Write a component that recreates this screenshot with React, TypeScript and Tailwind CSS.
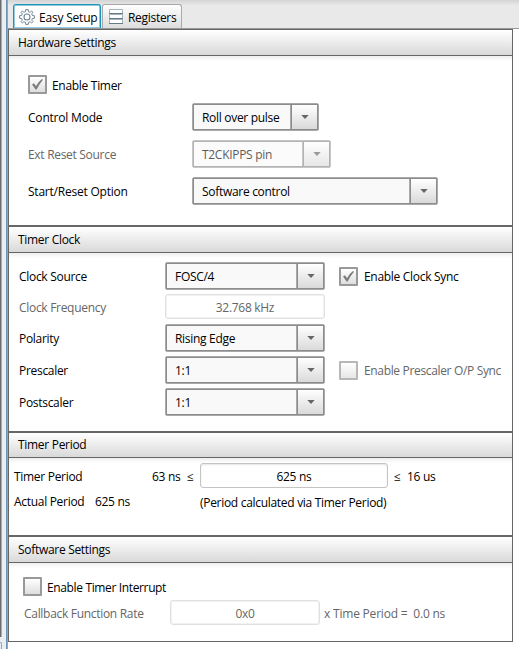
import React from "react";

const FONT = "font-['Open_Sans','Segoe_UI',sans-serif]";

function Label({ children, className = "pt-[2px]" }: { children: React.ReactNode; className?: string }) {
  return <span className={`block shrink-0 whitespace-pre ${className}`}>{children}</span>;
}

function Select({ value, className, disabled = false }: { value: string; className: string; disabled?: boolean }) {
  return (
    <div
      className={`flex h-7 shrink-0 rounded-[2px] border border-[#a9a9a9] ${disabled ? "opacity-65" : ""} ${className}`}
    >
      <div className="flex flex-1 border border-[#8c8c8c] bg-[#f9f9f9]">
        <span className="flex-1 whitespace-nowrap pl-2 leading-[25px]">{value}</span>
        <span className="flex w-[27px] border-l border-[#a9a9a9]">
          <span className="flex flex-1 items-center justify-center border-l border-[#8c8c8c] bg-linear-to-b from-white to-[#dadada]">
            <svg width="8" height="4" viewBox="0 0 8 4"><path d="M0.3 0H7.7L4 4Z" fill="#666" /></svg>
          </span>
        </span>
      </div>
    </div>
  );
}

function Check({ checked = false, disabled = false }: { checked?: boolean; disabled?: boolean }) {
  return (
    <span
      className={`flex size-[19px] shrink-0 items-center justify-center rounded-[1px] border-2 border-[#999] bg-linear-to-b from-white to-[#dedede] ${disabled ? "opacity-70" : ""}`}
    >
      {checked && (
        <svg width="13" height="13" viewBox="0 0 13 13">
          <path d="M1 6.5L3 5.3L5 8.2Q7.5 3.5 11 1L12 1.8Q8.3 6 5.6 11.5H4.6Z" fill="#7b7b7b" />
        </svg>
      )}
    </span>
  );
}

function Field({ value, className }: { value: string; className: string }) {
  return (
    <div
      className={`h-[25px] shrink-0 rounded-[3px] border bg-white text-center leading-[25px] ${className}`}
    >
      {value}
    </div>
  );
}

function Section({ title, className, titleClass = "h-[26px] leading-[25px]", children }: { title: string; className: string; titleClass?: string; children: React.ReactNode }) {
  return (
    <section className={`shrink-0 border-y border-[#666] ${className}`}>
      <h2 className={`border-b border-[#666] bg-linear-to-b from-white to-[#d9d9d9] pl-[9px] ${titleClass}`}>{title}</h2>
      <div className="h-[5px] bg-linear-to-b from-[#eeeeee] to-white" />
      {children}
    </section>
  );
}

function GearIcon() {
  return (
    <svg width="16" height="16" viewBox="0 0 16 16" fill="none" stroke="#6f8494">
      <path
        d="M6.7 .6H9.3L9.5 2.6L11.1 3.3L12.6 2L14 3.4L12.7 4.9L13.4 6.5L15.4 6.7V9.3L13.4 9.5L12.7 11.1L14 12.6L12.6 14L11.1 12.7L9.5 13.4L9.3 15.4H6.7L6.5 13.4L4.9 12.7L3.4 14L2 12.6L3.3 11.1L2.6 9.5L.6 9.3V6.7L2.6 6.5L3.3 4.9L2 3.4L3.4 2L4.9 3.3L6.5 2.6Z"
        strokeWidth="1"
      />
      <circle cx="8" cy="8" r="3" strokeWidth="1.1" />
    </svg>
  );
}

function RegistersIcon() {
  return (
    <svg width="14" height="15" viewBox="0 0 14 15">
      <path d="M.5 .5H13.5V4.5H.5ZM.5 5.5H13.5V9.5H.5ZM.5 10.5H13.5V14.5H.5Z" fill="#fff" stroke="#a5b3bc" />
      <path d="M0 4.5H14M0 9.5H14M0 14.5H14" stroke="#647a89" />
    </svg>
  );
}

export default function App() {
  return (
    <div className={`flex h-[649px] w-[519px] overflow-hidden bg-white text-[12px] tracking-[-0.3px] text-black ${FONT}`}>
      <div className="flex w-2 shrink-0 bg-[#e9eef2]">
        <div className="flex w-[2px] flex-col">
          <div className="h-[637px] border-r border-[#9aafc3] bg-[#6b6b6b]" />
          <div className="mt-[5px] h-[7px] rounded-tr border-t border-r border-[#8fa3b3]" />
        </div>
        <div className="ml-auto w-[2px] border-l border-[#6f93b5] bg-[#93a5b2]" />
      </div>
      <div className="flex min-w-0 flex-1 flex-col">
        <div className="flex h-[29px] shrink-0 items-end border-b border-[#999] bg-linear-to-b from-[#d4d4d4] via-[#e9e9e9] via-20% to-[#e9e9e9] pl-[5px]">
          <div className="flex h-6 w-[88px] items-center rounded-t-[3px] border border-b-0 border-[#1d93bd] bg-white pl-[5px] inset-ring inset-ring-[#8fcbe0]">
            <GearIcon />
            <Label className="ml-[4px] pt-[2px] tracking-[-0.2px]">Easy Setup</Label>
          </div>
          <div className="ml-[1px] flex h-6 w-20 items-center rounded-t-[3px] border border-b-0 border-[#a9a9a9] bg-linear-to-b from-white to-[#dddddd] pl-[6px]">
            <RegistersIcon />
            <Label className="ml-[5px] pt-[2px]">Registers</Label>
          </div>
        </div>
        <main className="flex h-[613px] w-[505px] shrink-0 flex-col border-x border-[#666]">
          <Section title="Hardware Settings" className="h-[197px]">
            <div className="flex flex-col pl-[19px] pt-[14px]">
              <div className="flex h-[19px] items-center gap-[5px]">
                <Check checked />
                <Label>Enable Timer</Label>
              </div>
              <div className="mt-[9px] flex h-7 items-center">
                <Label className="w-[164px] pt-[2px] tracking-[-0.2px]">Control Mode</Label>
                <Select value="Roll over pulse" className="w-[127px]" />
              </div>
              <div className="mt-[9px] flex h-7 items-center">
                <Label className="w-[164px] pt-[2px] text-[#666]">Ext Reset Source</Label>
                <Select value="T2CKIPPS pin" className="w-[139px]" disabled />
              </div>
              <div className="mt-[9px] flex h-7 items-center">
                <Label className="w-[164px] pt-[2px] tracking-[-0.22px]">Start/Reset Option</Label>
                <Select value="Software control" className="w-[246px]" />
              </div>
            </div>
          </Section>
          <Section title="Timer Clock" className="h-[206px]">
            <div className="flex flex-col pl-[10px] pt-[4px]">
              <div className="flex h-7 items-center">
                <Label className="w-[146px] pt-[2px]">Clock Source</Label>
                <Select value="FOSC/4" className="w-[160px]" />
                <div className="ml-[14px] flex items-center gap-[6px]">
                  <Check checked />
                  <Label>Enable Clock Sync</Label>
                </div>
              </div>
              <div className="mt-[4px] flex h-[25px] items-center text-[#666]">
                <Label className="w-[146px] pt-[2px]">Clock Frequency</Label>
                <Field value="32.768 kHz" className="w-[160px] border-[#e0e0e0] shadow-[inset_0_0_0_1px_#f2f2f2]" />
              </div>
              <div className="mt-[5px] flex h-7 items-center">
                <Label className="w-[146px] pt-[2px]">Polarity</Label>
                <Select value="Rising Edge" className="w-[160px]" />
              </div>
              <div className="mt-[4px] flex h-7 items-center">
                <Label className="w-[146px] pt-[2px]">Prescaler</Label>
                <Select value="1:1" className="w-[160px]" />
                <div className="ml-[14px] flex items-center gap-[6px] text-[#666]">
                  <Check disabled />
                  <Label className="pt-[2px] tracking-[-0.34px]">Enable Prescaler O/P Sync</Label>
                </div>
              </div>
              <div className="mt-[4px] flex h-7 items-center">
                <Label className="w-[146px] pt-[2px]">Postscaler</Label>
                <Select value="1:1" className="w-[160px]" />
              </div>
            </div>
          </Section>
          <Section title="Timer Period" className="h-[104px]" titleClass="h-[25px] leading-[23px]">
            <div className="pl-[5px]">
              <div className="flex h-[25px] items-center">
                <Label className="w-[138px] pt-[2px]">Timer Period</Label>
                <Label className="w-[35px] pt-[2px]">63 ns</Label>
                <Label className="w-[13px] pt-[2px]">≤</Label>
                <Field value="625 ns" className="w-[188px] border-[#c4c4c4] shadow-[inset_0_1px_2px_#e4e4e4]" />
                <Label className="ml-[6px] w-[13px] pt-[2px]">≤</Label>
                <Label>16 us</Label>
              </div>
              <div className="mt-[4px] flex h-[20px] items-center">
                <Label className="w-[81px]">Actual Period</Label>
                <Label className="w-[105px]">625 ns</Label>
                <Label>(Period calculated via Timer Period)</Label>
              </div>
            </div>
          </Section>
          <Section title="Software Settings" className="h-[106px]">
            <div className="flex flex-col pl-[14px] pt-[9px]">
              <div className="flex h-[19px] items-center gap-[5px]">
                <Check />
                <Label className="pt-[2px] tracking-[-0.36px]">Enable Timer Interrupt</Label>
              </div>
              <div className="mt-[4px] flex h-[25px] items-center text-[#666]">
                <Label className="w-[147px] pl-px pt-[2px]">Callback Function Rate</Label>
                <Field value="0x0" className="w-[150px] border-[#e0e0e0] shadow-[inset_0_0_0_1px_#f2f2f2]" />
                <Label className="ml-[4px] pt-[2px] tracking-[-0.2px]">x Time Period =  0.0 ns</Label>
              </div>
            </div>
          </Section>
        </main>
      </div>
    </div>
  );
}
